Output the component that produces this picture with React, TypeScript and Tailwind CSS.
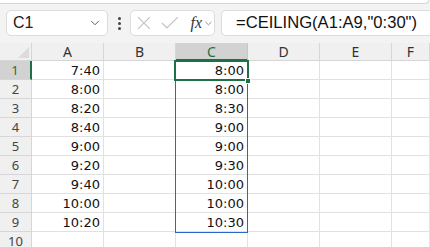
import { ChevronDown } from "lucide-react";

const colA = ["7:40", "8:00", "8:20", "8:40", "9:00", "9:20", "9:40", "10:00", "10:20"];
const colC = ["8:00", "8:00", "8:30", "9:00", "9:00", "9:30", "10:00", "10:00", "10:30"];
const letters = ["A", "B", "C", "D", "E", "F"];

const cellFont = "font-['DejaVu_Sans',sans-serif]";

const App = () => {
  const rows = Array.from({ length: 10 }, (_, i) => i + 1);

  return (
    <div className="w-[430px] h-[247px] overflow-hidden bg-[#f3f3f3] relative font-['Noto_Sans',sans-serif]">
      {/* ribbon edge */}
      <div className="h-[4px] w-[429px] bg-white border-b border-r border-[#d4d4d4] rounded-br-[6px]" />

      {/* name box + formula bar */}
      <div className="h-[39px] flex items-start pt-[6px] pl-[6px]">
        <div className="w-[102px] h-[26px] bg-white border border-[#dcdcdc] rounded-[5px] flex items-center justify-between pl-[6px] pr-[5px]">
          <span className="text-[16px] text-[#222] font-['Liberation_Sans',sans-serif]">C1</span>
          <ChevronDown className="w-[14px] h-[14px] text-[#555]" strokeWidth={1.6} />
        </div>
        <div className="w-[22px] h-[26px] flex flex-col items-center justify-center gap-[2px]">
          <div className="w-[3px] h-[3px] bg-[#444] rounded-full" />
          <div className="w-[3px] h-[3px] bg-[#444] rounded-full" />
          <div className="w-[3px] h-[3px] bg-[#444] rounded-full" />
        </div>
        <div className="w-[85px] h-[26px] bg-white border border-[#dcdcdc] rounded-[5px] flex items-center pl-[5px] gap-[6px]">
          <svg width="16" height="16" viewBox="0 0 16 16" className="text-[#c2c2c2]">
            <path d="M2 2 L14 14 M14 2 L2 14" stroke="currentColor" strokeWidth="1.2" fill="none" />
          </svg>
          <svg width="18" height="14" viewBox="0 0 18 14" className="text-[#c2c2c2] ml-[3px]">
            <path d="M1 7 L6 12 L17 1" stroke="currentColor" strokeWidth="1.2" fill="none" />
          </svg>
          <span className="ml-[6px] text-[16px] italic text-[#333] font-['Liberation_Serif',serif] leading-none">
            fx
          </span>
          <ChevronDown className="w-[11px] h-[11px] text-[#666] -ml-[5px]" strokeWidth={1.6} />
        </div>
        <div className="ml-[6px] flex-1 h-[26px] bg-white border border-r-0 border-[#dcdcdc] rounded-l-[5px] flex items-center pl-[14px]">
          <span className="text-[16.6px] text-[#111] font-['Liberation_Sans',sans-serif] whitespace-nowrap">
            =CEILING(A1:A9,"0:30")
          </span>
        </div>
      </div>

      {/* sheet grid */}
      <div className="grid grid-cols-[32px_72px_72px_72px_72px_72px_1fr]">
        <div className="h-[18px] bg-[#f0f0f0] border-r border-b border-[#d6d6d6] flex items-end justify-end p-[2px]">
          <svg width="11" height="11" viewBox="0 0 11 11">
            <path d="M11 0 L11 11 L0 11 Z" fill="#dcdcdc" />
          </svg>
        </div>
        {letters.map((l) => (
          <div
            key={l}
            className={`h-[18px] border-r flex items-center justify-center text-[14px] ${
              l === "C"
                ? "bg-[#d2d2d2] border-b-2 border-b-[#1e7145] border-r-[#c8c8c8] text-[#1e7145]"
                : "bg-[#f0f0f0] border-b border-[#d6d6d6] text-[#333]"
            }`}
          >
            {l}
          </div>
        ))}

        {rows.map((r) => (
          <div key={r} className="contents">
            <div
              className={`h-[19px] border-b flex items-center justify-center pt-[1px] text-[13px] ${
                r === 1
                  ? "bg-[#d2d2d2] border-r-2 border-r-[#1e7145] border-b-[#d6d6d6] text-[#1e7145]"
                  : "bg-[#f0f0f0] border-r border-[#d6d6d6] text-[#444]"
              }`}
            >
              {r}
            </div>
            {letters.map((l) => (
              <div
                key={l}
                className={`h-[19px] bg-white border-r border-b border-[#e1e1e1] flex items-center justify-end pr-[3px] pt-[1px] text-[13px] text-[#111] ${cellFont}`}
              >
                {l === "A" ? colA[r - 1] : l === "C" ? colC[r - 1] : ""}
              </div>
            ))}
          </div>
        ))}
      </div>

      {/* selected range C1:C9 */}
      <div className="absolute left-[175px] top-[61px] w-[73px] h-[172px] border border-[#2b67c9] pointer-events-none" />
      {/* active cell C1 */}
      <div className="absolute left-[174px] top-[60px] w-[75px] h-[21px] border-2 border-[#1e7145] pointer-events-none" />
      <div className="absolute left-[245px] top-[78px] w-[6px] h-[6px] bg-[#1e7145] border border-white pointer-events-none" />
    </div>
  );
};

export default App;
